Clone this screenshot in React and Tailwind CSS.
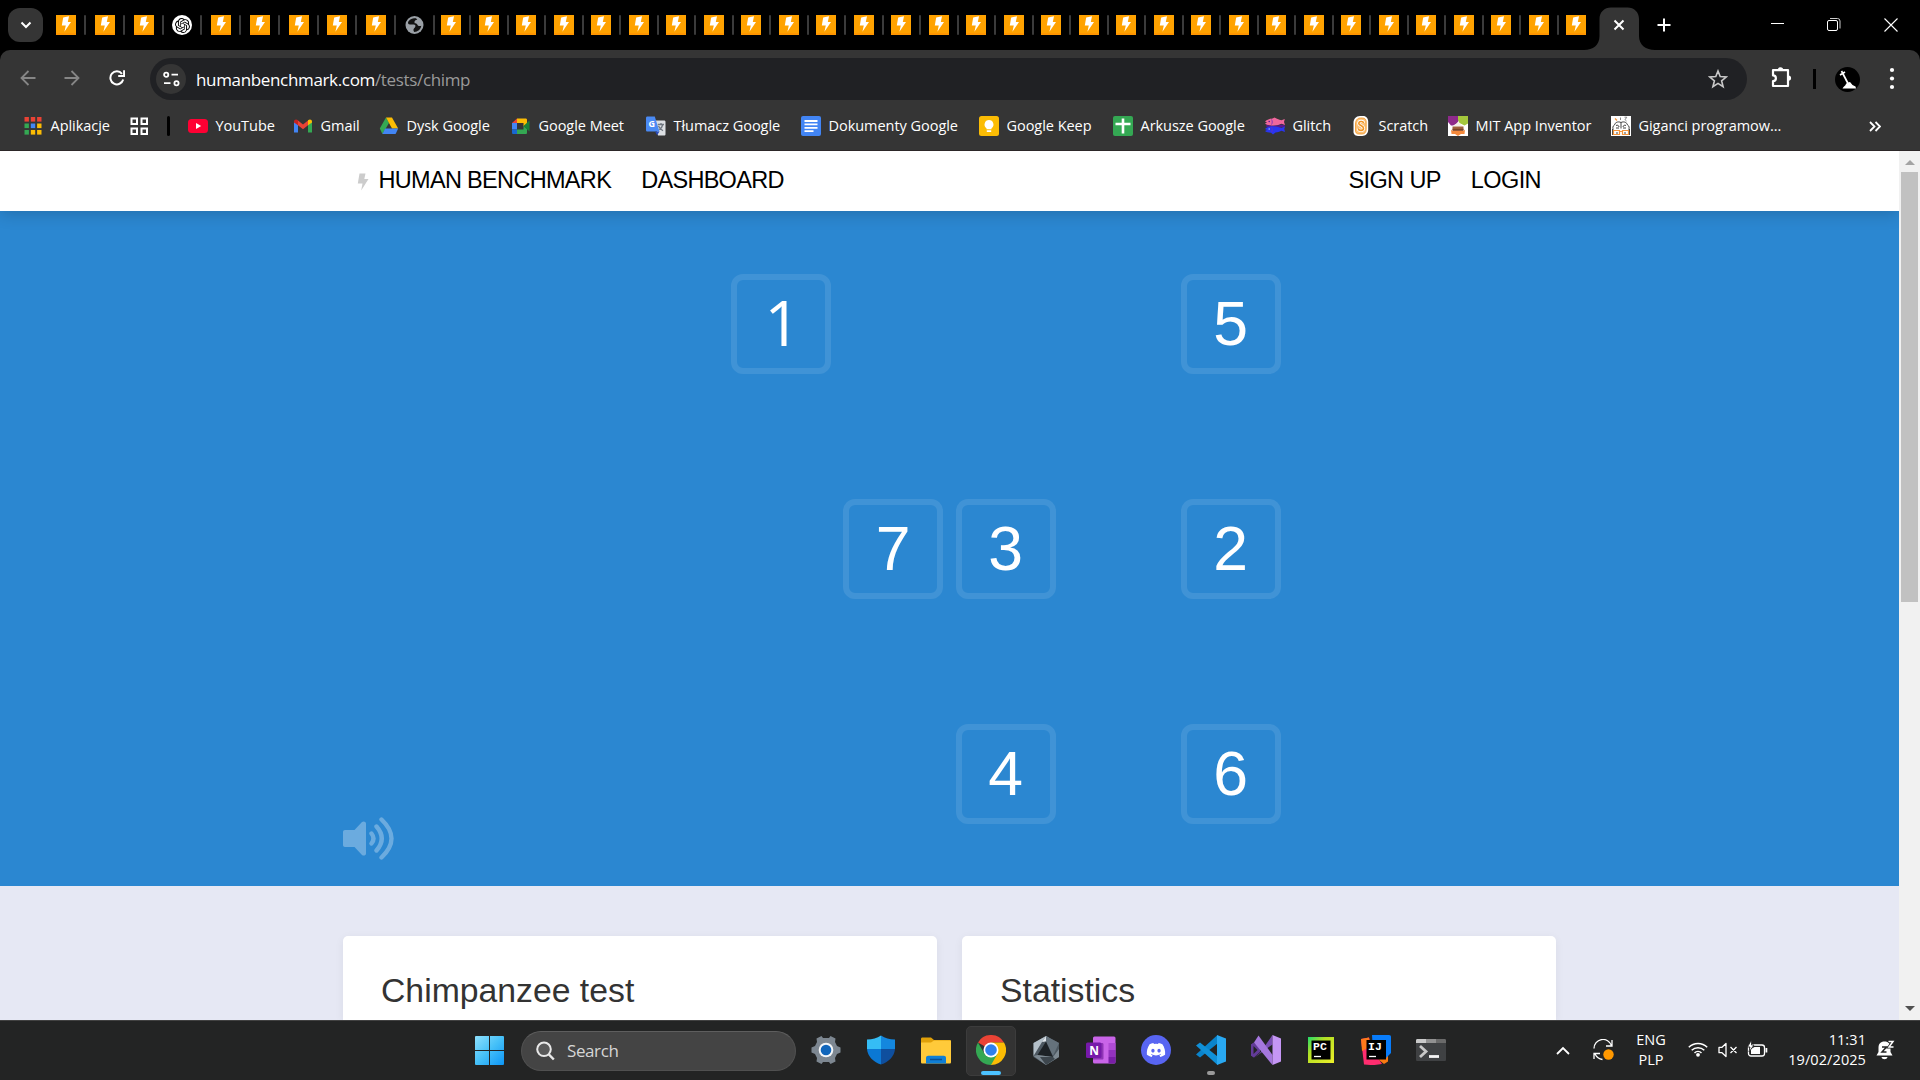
import React from "react";
import { FaDiscord } from "react-icons/fa";
import { SiOpenai } from "react-icons/si";

const UI = "font-['Open_Sans','Noto_Sans',sans-serif]";

/* ---------- tab strip ---------- */

function Bolt() {
  return (
    <div className="h-5 w-5 shrink-0 border-b-2 border-[#ff9500] bg-[#ffa200]">
      <svg viewBox="0 0 20 20" className="block h-5 w-5">
        <path d="M7.2 2.4 13 1.2 11.8 7h3.2L8.4 16.8l1.4-6.4H5.8Z" fill="#fff" />
      </svg>
    </div>
  );
}

function Globe() {
  return (
    <svg viewBox="0 0 20 20" className="h-5 w-5 shrink-0">
      <circle cx="9.500" cy="10" r="9" fill="#9aa0a6" />
      <path
        d="M11 3.300C8.500 3.300 5 3.800 3.500 6.200 2.400 8 3.100 9.600 5.100 9.600h3.600c1.600 0 2 1 1.600 2.200-.3 1.200-1.600 1.400-1.800 2.800-.2 1 .2 1.800.8 2.400 3.600-.2 6.400-2.600 7-6.200-1.600.6-3.400.4-4-1.200-.4-1-1.600-1.400-2.600-1.400-.8-2 .6-3.400 2.600-3.400Z"
        fill="#111"
      />
    </svg>
  );
}

function OpenAi() {
  return (
    <div className="flex h-5 w-5 shrink-0 items-center justify-center rounded-full bg-white">
      <SiOpenai className="h-[15px] w-[15px] text-black" />
    </div>
  );
}

function Tab({ kind, wide, last }) {
  const width = kind === "globe" ? "w-[36.25px]" : wide ? "w-[38.75px]" : "w-[37.5px]";
  return (
    <div className={width + " flex shrink-0 items-center"}>
      {kind === "openai" ? <OpenAi /> : kind === "globe" ? <Globe /> : <Bolt />}
      {!last && <div className="ml-[8px] h-5 w-0.5 shrink-0 rounded-full bg-[#3b3b3b]" />}
    </div>
  );
}

function TabStrip() {
  const tabs = Array.from({ length: 41 }, (_, i) => (i === 3 ? "openai" : i === 9 ? "globe" : "bolt"));
  return (
    <div className="flex h-[50px] items-start bg-black text-white">
      <div className="ml-2 mt-2 flex h-[34px] w-[35px] shrink-0 items-center justify-center rounded-xl bg-[#353535]">
        <svg viewBox="0 0 12 8" className="h-2 w-3">
          <path d="m1.500 1.500 4.500 4.500 4.500-4.500" fill="none" stroke="#fff" strokeWidth="2" />
        </svg>
      </div>
      <div className="ml-[13px] mt-[15px] flex shrink-0">
        {tabs.map((k, i) => (
          <Tab key={i} kind={k} wide={i < 10} last={i === 40} />
        ))}
      </div>
      <svg viewBox="0 0 72 43" className="-ml-[20px] mt-[7px] h-[43px] w-[72px] shrink-0">
        <path d="M0 43c9 0 15.500-5 15.500-14V12c0-7 5-11.500 11.500-11.500h16.500C50 .5 55 5 55 12v17c0 9 7 14 16 14Z" fill="#353535" />
        <path d="m30.500 13.500 9 9m0-9-9 9" stroke="#fff" strokeWidth="2" />
      </svg>
      <svg viewBox="0 0 14 14" className="ml-px mt-[18px] h-3.5 w-3.5 shrink-0">
        <path d="M7 .5v13M.5 7h13" stroke="#fff" strokeWidth="2" />
      </svg>
      <div className="ml-auto flex w-[150px] shrink-0 justify-between pr-[22px] pt-[16px]">
        <svg viewBox="0 0 14 16" className="h-4 w-3.5">
          <path d="M1 7.500h13" stroke="#fff" />
        </svg>
        <svg viewBox="0 0 14 16" className="h-4 w-3.5">
          <rect x=".5" y="4.500" width="10" height="10" rx="1.500" fill="none" stroke="#fff" />
          <path d="M3 2.500h7.500a2.500 2.500 0 0 1 2.500 2.500v7.500" fill="none" stroke="#ccc" />
        </svg>
        <svg viewBox="0 0 14 16" className="h-4 w-3.5">
          <path d="m.5 2.500 13 13m0-13-13 13" stroke="#fff" strokeWidth="1.100" />
        </svg>
      </div>
    </div>
  );
}

/* ---------- address bar ---------- */

function Toolbar() {
  return (
    <div className="bg-black">
      <div className="flex h-[56px] items-center rounded-t-[10px] bg-[#353535] pt-[2px]">
        <svg viewBox="0 0 16 16" className="ml-5 mb-0.5 h-4 w-4">
          <path d="M15.500 8H1.500M8.500 1 1.500 8l7 7" fill="none" stroke="#868686" strokeWidth="1.800" />
        </svg>
        <svg viewBox="0 0 16 16" className="mb-0.5 ml-[28px] h-4 w-4">
          <path d="M.5 8h14M7.500 1l7 7-7 7" fill="none" stroke="#868686" strokeWidth="1.800" />
        </svg>
        <svg viewBox="0 0 16 16" className="mb-0.5 ml-[29px] h-4 w-4">
          <path d="M14.200 9.500A6.500 6.500 0 1 1 13 3.800" fill="none" stroke="#fff" strokeWidth="2" />
          <path d="M9.200 6.100h5.900V.2" fill="none" stroke="#fff" strokeWidth="2" />
        </svg>
        <div className="ml-[25px] flex h-[42px] w-[1597px] shrink-0 items-center rounded-full bg-[#202124] pl-1.5 pr-[19px]">
          <div className="flex h-[30px] w-[30px] items-center justify-center rounded-full bg-[#353535]">
            <svg viewBox="0 0 17 16" className="h-4 w-[17px]">
              <g fill="none" stroke="#fff" strokeWidth="1.800">
                <circle cx="3.200" cy="3.700" r="2.100" />
                <path d="M8.500 3.700h6.500M1 12.200h6.500" />
                <circle cx="13.500" cy="12.200" r="2.100" />
              </g>
            </svg>
          </div>
          <div className={UI + " ml-[10px] mt-0.5 text-[17px] leading-5 tracking-[-0.34px] text-white"}>
            humanbenchmark.com<span className="text-[#9a9a9a]">/tests/chimp</span>
          </div>
          <svg viewBox="0 0 20 20" className="ml-auto h-5 w-5">
            <path d="m10 2 2.200 5.600 6 .4-4.600 3.800 1.500 5.900L10 14.400l-5.100 3.300 1.500-5.900L1.800 8l6-.4Z" fill="none" stroke="#c9c9c9" strokeWidth="1.600" />
          </svg>
        </div>
        <svg viewBox="0 0 22 22" className="mb-1 ml-6 h-[22px] w-[22px] shrink-0">
          <path d="M2 4.200H17V20H2v-4.800a2.900 2.900 0 0 0 0-5.800Z" fill="none" stroke="#fff" strokeWidth="2.200" strokeLinejoin="round" />
          <path d="M6.800 4a2.700 2.700 0 0 1 5.400 0ZM17.400 9.400a2.700 2.700 0 0 1 0 5.400Z" fill="#fff" />
        </svg>
        <div className="ml-5 h-5 w-[3px] bg-black" />
        <svg viewBox="0 0 25 25" className="ml-[19px] h-[25px] w-[25px]">
          <circle cx="12.500" cy="12.500" r="12.500" fill="#000" />
          <path d="M7.500 21.500c1-2 2.500-2.200 3.500-4.500l1-1.200 3-.8 2.500 3 3 1.500.5 2Z" fill="#fff" />
          <path d="m6.500 4 6 11.500M5 8l5-3M11 13l2 3" stroke="#fff" strokeWidth="1.700" />
        </svg>
        <svg viewBox="0 0 6 24" className="ml-[29px] h-6 w-1.5">
          <circle cx="3" cy="3" r="2.100" fill="#fff" />
          <circle cx="3" cy="11.500" r="2.100" fill="#fff" />
          <circle cx="3" cy="20" r="2.100" fill="#fff" />
        </svg>
      </div>
    </div>
  );
}

/* ---------- bookmarks ---------- */

const appColors = ["#ea4335", "#ea4335", "#ea4335", "#34a853", "#4285f4", "#fbbc04", "#34a853", "#fbbc04", "#fbbc04"];

const icons = {
  apps: (
    <g>
      {appColors.map((c, i) => (
        <rect key={i} x={1.500 + (i % 3) * 6.300} y={1 + Math.floor(i / 3) * 6.500} width="4.400" height="4.600" fill={c} />
      ))}
    </g>
  ),
  youtube: (
    <g>
      <rect y="3" width="20" height="14" rx="3.500" fill="#ff0033" />
      <path d="m8 7 5.200 3L8 13Z" fill="#fff" />
    </g>
  ),
  gmail: (
    <g>
      <path d="M1 5v11.500h4V8Z" fill="#4285f4" />
      <path d="M15 8v8.500h4V5Z" fill="#34a853" />
      <path d="M5 4.500 10 8.500l5-4V9.300L10 13.200 5 9.300Z" fill="#ea4335" />
      <path d="M1 5.500C1 3.200 3.400 2.800 5 4.200v5.100L1 6.500Z" fill="#c5221f" />
      <path d="M19 5.500c0-2.300-2.400-2.700-4-1.300v5.100l4-2.800Z" fill="#fbbc04" />
    </g>
  ),
  drive: (
    <g>
      <path d="m7 1.500 3 5.500-6.600 11L.8 12.500Z" fill="#34a853" />
      <path d="M7 1.500h6l6.200 11H13Z" fill="#fbbc04" />
      <path d="M6.200 12.500h13L16.600 18H3.400Z" fill="#4285f4" />
    </g>
  ),
  meet: (
    <g>
      <path d="M6 2.500h8.500c1 0 1.500.5 1.500 1.500v4l-3.500 2.500V7H6Z" fill="#fbbc04" />
      <path d="M6 2.500V7H1Z" fill="#ea4335" />
      <path d="M1 7h5v6.500H1Z" fill="#4285f4" />
      <path d="M1 13.500h5V18H2.500C1.500 18 1 17.500 1 16.500Z" fill="#1967d2" />
      <path d="M6 13.500h6.500V10l3.500 3v3.500c0 1-.5 1.500-1.500 1.500H6Z" fill="#34a853" />
      <path d="m12.500 10 6-5.500v11Z" fill="#188038" />
    </g>
  ),
  translate: (
    <g>
      <path d="M8 4.500h10c1 0 1.500.5 1.500 1.500v12c0 1-.5 1.500-1.500 1.500h-6Z" fill="#dcdfe3" />
      <path d="M1.500.5h7.300L13.500 15.500h-12C.6 15.500 0 15 0 14V2C0 1 .6.5 1.500.5Z" fill="#4a8af4" />
      <path d="M9 15.500h4.500l-2.300 3.800Z" fill="#2a4bb8" />
      <path d="M11.800 8.500h6.200m-3-1.500v1.500m1.800 0c-.5 2.500-2.500 4.500-3.500 5.200m-.8-3.700c.8 2 2.800 3.800 4.500 4.800" fill="none" stroke="#6f7780" strokeWidth="1.300" />
      <text x="2.600" y="11" fontFamily="Open Sans" fontWeight="700" fontSize="9" fill="#fff">G</text>
    </g>
  ),
  docs: (
    <g>
      <rect width="20" height="20" rx="2" fill="#4285f4" />
      <path d="M3.500 5h13M3.500 8.400h13M3.500 11.800h13M3.500 15.200h9" stroke="#fff" strokeWidth="1.800" />
    </g>
  ),
  keep: (
    <g>
      <rect width="20" height="20" rx="2.500" fill="#fbbc04" />
      <path d="M10 4a4.500 4.500 0 0 0-2.500 8.200v1h5v-1A4.500 4.500 0 0 0 10 4ZM7.800 14.200h4.400v1.800H7.800Z" fill="#fff" />
    </g>
  ),
  sheets: (
    <g>
      <rect width="20" height="20" rx="2" fill="#34a853" />
      <path d="M10 2.500v15M2.500 8h15" stroke="#fff" strokeWidth="2.600" />
    </g>
  ),
  glitch: (
    <g>
      <path d="M0 5.500C2 3.500 5 2.800 7.500 2.500l2-1 2.500 1.300c1.800.5 3.200 1.400 4.500 1.400L19.800 3 19 6l1 3-3.500-1.200C14 9 11 9.700 8 9.700 4.500 9.700 1.500 9 0 7.500l2-1Z" fill="#f0679c" />
      <path d="M1.500 8.800c4 1.400 11 1.200 15-.3L20 9.500l-.5 2-3-.5C12 12.500 5 12.500 1 10.500Z" fill="#5a1790" />
      <path d="M0 13C2 11 5 10.300 8 10.300c4 0 6.500 1.500 8.500 1.500L20 10.500 19.300 13l.7 3-3.500-1.200c-2 1-4 1.500-6 1.800L8 18.500l-2-1.800C3.500 16.500 1 16 0 15l2-1Z" fill="#2a35ee" />
      <circle cx="4.200" cy="5.500" r=".8" fill="#5a1790" />
      <circle cx="4.200" cy="13" r=".8" fill="#9fb4ff" />
      <path d="M6.500 3.500c1 1.500 1 3.500 0 5M6.500 11.200c1 1.500 1 3.500 0 4.800" stroke="#6b2fc0" strokeWidth=".8" fill="none" />
    </g>
  ),
  scratch: (
    <g>
      <path d="M9 0h3c3.500 0 5.200 2.500 5.200 5.500v8.300c0 3.500-2.500 6.200-6 6.200H7c-3 0-4.800-2-4.500-5.200V7C2.500 3 5 0 9 0Z" fill="#fff" />
      <path d="M9.500 2h2c2.500 0 3.700 1.700 3.700 4v7.500c0 2.700-1.500 4.500-4.200 4.500H7.800c-2.300 0-3.500-1.500-3.300-4V8C4.500 4.500 6.200 2 9.500 2Z" fill="#fbc27a" stroke="#f29422" strokeWidth=".8" />
      <path d="M12.500 7C12.200 4.800 7.800 4.900 7.800 7.500c0 2.200 4.700 2 4.700 4.700 0 2.800-4.700 3-5.300.3" fill="none" stroke="#fff" strokeWidth="3.200" />
      <path d="M12.500 7C12.200 4.800 7.800 4.900 7.800 7.500c0 2.200 4.700 2 4.700 4.700 0 2.800-4.700 3-5.300.3" fill="none" stroke="#f29422" strokeWidth="1.600" />
    </g>
  ),
  mit: (
    <g>
      <path d="M0 0h20v20H0Z" fill="#fff" />
      <path d="M0 0h10l1 4-2 3.500-4 2H3L0 6Z" fill="#8e2a8b" />
      <path d="M10 0h10v7.500l-3.500 2-5-2.500L10 4Z" fill="#a4c73c" />
      <path d="m10 6 5 4.500H5Z" fill="#f4ece6" />
      <path d="M4.500 10.500h11v5h-11Z" fill="#a0623d" />
      <path d="M4.500 12.800h11v1.400h-11Z" fill="#7a4226" />
      <path d="m3 13.500 1.500 1.500h11L17 13.500 16.500 18H13l-3 2-3-2H3.500Z" fill="#f58a3c" />
    </g>
  ),
  giganci: (
    <g>
      <path d="M0 0h20v20H0Z" fill="#fff" />
      <g fill="none" stroke="#444" strokeWidth="1">
        <path d="M10 6.500c-3-1.500-6 0-6.500 2.500-2 .8-2 3.500-1 4.500M10 6.500c3-1.500 6 0 6.500 2.500 2 .8 2 3.500 1 4.500M10 6.500v6M5 9.500c1.500-.8 3 0 3 1.500M15 9.500c-1.500-.8-3 0-3 1.500M1.500 13v6M18.500 13v6M5 12h3M12 12h3" />
      </g>
      <path d="M2.500 14.500h6v4h-6ZM11.500 14.500h6v4h-6ZM8.500 15.500h3M4 2.500l2 2" stroke="#f5953a" strokeWidth="1.200" fill="none" />
      <path d="M5 17h2M13 17h2" stroke="#444" />
      <path d="M9.500 4V1.500M13.500 1.200h2.300L13.800 4M14.500 4.500l1 .5" fill="none" stroke="#888" />
    </g>
  ),
};

function Bookmark({ icon, label, width }) {
  return (
    <div className={width + " flex shrink-0 items-center"}>
      <svg viewBox="0 0 20 20" className="h-5 w-5 shrink-0">{icons[icon]}</svg>
      <span className="ml-[7.500px] whitespace-nowrap tracking-[-0.04px]">{label}</span>
    </div>
  );
}

function Bookmarks() {
  return (
    <div className={UI + " flex h-[45px] items-center border-b border-[#2c2728] bg-[#353535] pb-[4px] pl-[23px] text-[14.500px] leading-5 text-white"}>
      <Bookmark icon="apps" label="Aplikacje" width="w-[107px]" />
      <svg viewBox="0 0 19 19" className="h-[19px] w-[19px] shrink-0">
        <g fill="none" stroke="#fff" strokeWidth="2">
          <path d="M1.500 1.500h5.500V7H1.500ZM11.500 1.500H17V7h-5.500ZM1.500 11.500h5.500V17H1.500ZM11.500 11.500H17V17h-5.500Z" />
        </g>
      </svg>
      <div className="ml-[18px] mr-[18px] h-5 w-[3px] shrink-0 rounded-full bg-black" />
      <Bookmark icon="youtube" label="YouTube" width="w-[105px]" />
      <Bookmark icon="gmail" label="Gmail" width="w-[86px]" />
      <Bookmark icon="drive" label="Dysk Google" width="w-[132px]" />
      <Bookmark icon="meet" label="Google Meet" width="w-[135px]" />
      <Bookmark icon="translate" label="Tłumacz Google" width="w-[155px]" />
      <Bookmark icon="docs" label="Dokumenty Google" width="w-[178px]" />
      <Bookmark icon="keep" label="Google Keep" width="w-[134px]" />
      <Bookmark icon="sheets" label="Arkusze Google" width="w-[152px]" />
      <Bookmark icon="glitch" label="Glitch" width="w-[86px]" />
      <Bookmark icon="scratch" label="Scratch" width="w-[97px]" />
      <Bookmark icon="mit" label="MIT App Inventor" width="w-[163px]" />
      <Bookmark icon="giganci" label="Giganci programow..." width="w-[180px]" />
      <svg viewBox="0 0 12 11" className="ml-auto mr-[39px] h-[11px] w-3 shrink-0">
        <path d="m1 1 4.500 4.500L1 10M6.500 1 11 5.500 6.500 10" fill="none" stroke="#fff" strokeWidth="1.800" />
      </svg>
    </div>
  );
}

/* ---------- page ---------- */

const tiles = [
  { n: 1, place: "col-start-3 row-start-1 pl-[3px] pb-[4px] font-['Open_Sans',sans-serif]" },
  { n: 5, place: "col-start-7 row-start-1 pb-[2px]" },
  { n: 7, place: "col-start-4 row-start-3 pb-[2px]" },
  { n: 3, place: "col-start-5 row-start-3 pb-[2px]" },
  { n: 2, place: "col-start-7 row-start-3 pb-[2px]" },
  { n: 4, place: "col-start-5 row-start-5 pb-[2px]" },
  { n: 6, place: "col-start-7 row-start-5 pb-[2px]" },
];

function Page() {
  return (
    <div className="flex h-[869px] overflow-hidden font-['Liberation_Sans',Arial,sans-serif]">
      <div className="flex w-[1899px] shrink-0 flex-col overflow-hidden bg-[#e6e8f4]">
        <div className="z-10 flex h-[60px] shrink-0 items-center bg-white pb-px pl-[357px] pr-[358px] text-[23.500px] text-black shadow-[0_2px_16px_rgba(0,0,0,0.2)]">
          <svg viewBox="0 0 12 18" className="mt-0.5 h-[18px] w-3">
            <path d="M2.500.5h6L7.300 6h4.200L4.200 17.500 5.500 10.500H.8Z" fill="#ccc" />
          </svg>
          <span className="ml-[9.500px] tracking-[-0.68px]">HUMAN BENCHMARK</span>
          <span className="ml-[30px] tracking-[-0.7px]">DASHBOARD</span>
          <span className="ml-auto tracking-[-0.6px]">SIGN UP</span>
          <span className="ml-[30px] tracking-[-0.6px]">LOGIN</span>
        </div>
        <div className="flex h-[675px] shrink-0 flex-col bg-[#2b87d1] pt-[56.500px]">
          <div className="ml-[499.500px] grid grid-cols-[repeat(8,112.5px)] grid-rows-[repeat(5,112.5px)]">
            {tiles.map((t) => (
              <div
                key={t.n}
                className={t.place + " m-[6.250px] flex items-center justify-center rounded-[12px] border-[6px] border-white/10 text-[62.500px] leading-none text-white"}
              >
                {t.n}
              </div>
            ))}
          </div>
          <svg viewBox="0 0 51 43" className="-mt-[13px] ml-[343px] h-[43px] w-[51px]">
            <g opacity=".3">
              <path d="M2 13h9.500l7.500-8c1.500-1.200 4-.5 4 1.500v30c0 2-2.500 2.700-4 1.500L11.500 30H2c-1.200 0-2-.8-2-2V15c0-1.200.8-2 2-2Z" fill="#fff" />
              <path d="M28.500 16.500q4 5 0 10M33.500 9.500q10.500 12 0 24M38.500 2.500q20 19 0 38" fill="none" stroke="#fff" strokeWidth="4.400" strokeLinecap="round" />
            </g>
          </svg>
        </div>
        <div className="mt-[50px] flex flex-1 gap-[25px] px-[343px] text-[33.750px] leading-[38px] text-[#333]">
          <div className="h-full w-[594px] rounded-t-[5px] bg-white pl-[38px] pt-[35px] shadow-[0_2px_10px_rgba(0,0,0,0.06)]">Chimpanzee test</div>
          <div className="h-full w-[594px] rounded-t-[5px] bg-white pl-[38px] pt-[35px] shadow-[0_2px_10px_rgba(0,0,0,0.06)]">Statistics</div>
        </div>
      </div>
      <div className="flex w-[21px] shrink-0 flex-col items-center bg-[#f1f1f1] pt-[9px]">
        <svg viewBox="0 0 10 5" className="h-[5px] w-2.5"><path d="m5 0 5 5H0Z" fill="#a3a3a3" /></svg>
        <div className="mt-[7px] h-[430px] w-[17px] bg-[#c1c1c1]" />
        <svg viewBox="0 0 10 5" className="mb-[9px] mt-auto h-[5px] w-2.5"><path d="m5 5 5-5H0Z" fill="#505050" /></svg>
      </div>
    </div>
  );
}

/* ---------- taskbar ---------- */

const taskIcons = {
  settings: (
    <g>
      <path d="M10.500 1 12 3h6l1.500-2 5 2.500-.5 3.500 2 4 3.500 1.500v5L26 19l-2 4 .5 3.500-5 2.500L18 27h-6l-1.500 2-5-2.500L6 23l-2-4L.5 17.500v-5L4 11l2-4-.5-3.500Z" fill="#7d8791" />
      <circle cx="15" cy="15" r="7.300" fill="#f4f6f8" />
      <circle cx="15" cy="15" r="5.300" fill="#1166bb" />
    </g>
  ),
  defender: (
    <g>
      <path d="M15 .5c4 2.800 8.500 3.800 14 4V14H15Z" fill="#1487de" />
      <path d="M15 .5C11 3.300 6.500 4.300 1 4.500V14h14Z" fill="#35bdf5" />
      <path d="M1 14h14v15.500C7 27 1.500 21 1 14Z" fill="#0b78d4" />
      <path d="M29 14H15v15.500C23 27 28.500 21 29 14Z" fill="#0f4f9e" />
    </g>
  ),
  folder: (
    <g>
      <path d="M0 4c0-1 .5-1.500 1.500-1.500H10l3 2.500h15c1.500 0 2 .5 2 1.500V12H0Z" fill="#e0a009" />
      <path d="M0 7.500h10l3-2h17V27c0 1-.5 1.500-1.500 1.500h-27C.5 28.500 0 28 0 27Z" fill="#ffca3a" />
      <path d="M5 28.500V23c0-1.500 1-2.200 2.200-2.200h15.600c1.200 0 2.200.7 2.200 2.200v5.500Z" fill="#0f7fd6" />
      <path d="M9 24.500h12" stroke="#0a4f94" strokeWidth="1.500" />
    </g>
  ),
  chrome: (
    <g>
      <path d="M2 7.500a15 15 0 0 1 26 0H15v7.500Z" fill="#ea4335" />
      <path d="M28 7.500A15 15 0 0 1 15 30l-1-1 7.500-14L15 7.500Z" fill="#fbbc04" />
      <path d="M2 7.500A15 15 0 0 0 15 30l6.500-11.200L15 21l-6.500-2.200Z" fill="#34a853" />
      <circle cx="15" cy="15" r="7.500" fill="#fff" />
      <circle cx="15" cy="15" r="5.800" fill="#2f80ed" />
    </g>
  ),
  gem: (
    <g>
      <path d="M15 1 28 8v14l-13 8L2.500 22V8Z" fill="#4d5861" />
      <path d="M15 1 2.500 8v13L11 7Z" fill="#b4c0c9" />
      <path d="M15 1 11 7l10-1.500Z" fill="#dfe6eb" />
      <path d="m15 1 13 7-6 13-7-14Z" fill="#65727c" />
      <path d="M15 6.500 6.500 20l15.500 2Z" fill="#1d2226" />
      <path d="m2.500 21 4-1L22 22l6-8v8l-13 8Z" fill="#7c8891" />
      <path d="m9 22 6 8 9-6-2-2Z" fill="#3d464d" />
    </g>
  ),
  onenote: (
    <g>
      <rect x="7" y="1.500" width="22.500" height="27" rx="1.500" fill="#c964e8" />
      <path d="M22.500 8h7v7h-7Z" fill="#b04bd5" />
      <path d="M22.500 15h7v7h-7Z" fill="#9332bf" />
      <path d="M22.500 22h7v5c0 1-.5 1.500-1.500 1.500h-5.500Z" fill="#7a1fa8" />
      <path d="M7 8h9c1 0 1.500.5 1.500 1.500V23c0 1-.5 1.500-1.500 1.500H7Z" fill="#8f35b5" />
      <rect y="7.500" width="15.500" height="15.500" rx="1.500" fill="#7719aa" />
      <text x="3.200" y="19.500" fontFamily="Open Sans" fontWeight="700" fontSize="12" fill="#fff">N</text>
    </g>
  ),
  vscode: (
    <g>
      <path d="M21.500 0v8.500L4 22.500 0 19.600Z" fill="#0a84cc" />
      <path d="M21.500 30v-8.500L4 7.500 0 10.400Z" fill="#1090d8" />
      <path d="M21 0 30 3.500v23L21 30Z" fill="#29a9f2" />
    </g>
  ),
  vs: (
    <g>
      <path d="m0 9.500 3-2v15l-3-2Z" fill="#5b3590" />
      <path d="M0 9.500 3 7.500l6 5.200V17l-6 5.500-3-2Z" fill="#623b98" />
      <path d="M9 18 21.500 0v9.500L3 23Z" fill="#7a4fb5" />
      <path d="m2.500 11 4 4-4 4Z" fill="#232424" />
      <path d="M7.500 0.500 21.500 20V30L3 7.500Z" fill="#a577de" />
      <path d="m21.500 0 8.500 3.500v23L21.500 30Z" fill="#c596f5" />
    </g>
  ),
  pycharm: (
    <g>
      <defs>
        <linearGradient id="pc" x1="0" y1="0" x2="1" y2="1">
          <stop offset="0" stopColor="#1fdc6c" />
          <stop offset=".35" stopColor="#b4e024" />
          <stop offset="1" stopColor="#eef02a" />
        </linearGradient>
      </defs>
      <rect x="2" y="2" width="26" height="26" fill="url(#pc)" />
      <rect x="5.500" y="5.500" width="19" height="19" fill="#000" />
      <text x="7" y="15" fontFamily="Liberation Mono" fontWeight="700" fontSize="11.500" fill="#fff">PC</text>
      <path d="M8 21.500h7" stroke="#fff" strokeWidth="1.300" />
    </g>
  ),
  idea: (
    <g>
      <path d="M0 4 8 2.500l4 13L21 29l-9 1.200L3 29.500Z" fill="#ff2d6f" />
      <path d="M0 4 8 2.500 9 12 1 16Z" fill="#ff7a1a" />
      <path d="M20 20h7v6.500L23 29l-5-4Z" fill="#f97a12" />
      <path d="M11 0h17c1.300 0 2 .7 2 2v16l-6 6-12-9Z" fill="#087cfa" />
      <rect x="5.500" y="5" width="19.500" height="19.500" fill="#000" />
      <text x="7" y="15" fontFamily="Liberation Mono" fontWeight="700" fontSize="11.500" fill="#fff">IJ</text>
      <path d="M8 21.500h7" stroke="#fff" strokeWidth="1.300" />
    </g>
  ),
  terminal: (
    <g>
      <path d="M0 8h30v16.500c0 1-.5 1.500-1.500 1.500h-27C.5 26 0 25.500 0 24.500Z" fill="#3f4143" />
      <path d="M1.500 4H10v4H0V5.500C0 4.500.5 4 1.500 4Z" fill="#c9c9c9" />
      <path d="M10 4h10v4H10Z" fill="#919191" />
      <path d="M20 4h8.500c1 0 1.500.5 1.500 1.500V8H20Z" fill="#6a6a6a" />
      <path d="m4 11 6 5.500-6 5.500" fill="none" stroke="#c8c8c8" strokeWidth="2.800" />
      <path d="M13 21.500h10" stroke="#f4f4f4" strokeWidth="2.800" />
    </g>
  ),
};

function TaskIcon({ name, active, dot }) {
  return (
    <div className="flex w-[55px] shrink-0 justify-center">
      <div className={(active ? "border border-[#3c3c3c] bg-[#333333]" : "border border-transparent") + " relative flex h-[50px] w-[50px] items-center justify-center rounded-[5px] pb-px"}>
        {name === "discord" ? (
          <div className="flex h-[30px] w-[30px] items-center justify-center rounded-full bg-[#5865f2]">
            <FaDiscord className="h-[20px] w-[20px] text-white" />
          </div>
        ) : (
          <svg viewBox="0 0 30 30" className="h-[30px] w-[30px]">{taskIcons[name]}</svg>
        )}
        {active && <div className="absolute bottom-0 h-1 w-5 rounded-full bg-[#4cc2ff]" />}
        {dot && <div className="absolute bottom-0 h-1 w-2 rounded-full bg-[#9a9a9a]" />}
      </div>
    </div>
  );
}

function Taskbar() {
  return (
    <div className={UI + " flex h-[60px] items-center border-t border-[#414141] bg-[#232424] text-white"}>
      <svg viewBox="0 0 29 29" className="ml-[475px] h-[29px] w-[29px] shrink-0">
        <defs>
          <linearGradient id="win" x1="0" y1="0" x2="1" y2="1">
            <stop offset="0" stopColor="#8ee0fd" />
            <stop offset=".5" stopColor="#45c0f8" />
            <stop offset="1" stopColor="#0d95f5" />
          </linearGradient>
        </defs>
        <path d="M1 0h13v14H0V1q0-1 1-1ZM15 0h13q1 0 1 1v13H15ZM0 15h14v14H1q-1 0-1-1ZM15 15h14v13q0 1-1 1H15Z" fill="url(#win)" />
      </svg>
      <div className="ml-[17px] flex h-10 w-[275px] shrink-0 items-center rounded-full border border-[#505050] border-t-[#5e5e5e] bg-[#444444]">
        <svg viewBox="0 0 19 20" className="ml-[14px] h-5 w-[19px]">
          <circle cx="8" cy="8.300" r="6.800" fill="#5a5a5a" stroke="#e8e8e8" strokeWidth="2" />
          <path d="m12.800 13.300 5 5.200" stroke="#e8e8e8" strokeWidth="2.400" />
        </svg>
        <span className="ml-3 text-[17px] tracking-[-0.4px] text-[#d6d6d6]">Search</span>
      </div>
      <div className="ml-[2.500px] flex">
        <TaskIcon name="settings" />
        <TaskIcon name="defender" />
        <TaskIcon name="folder" />
        <TaskIcon name="chrome" active />
        <TaskIcon name="gem" />
        <TaskIcon name="onenote" />
        <TaskIcon name="discord" />
        <TaskIcon name="vscode" dot />
        <TaskIcon name="vs" />
        <TaskIcon name="pycharm" />
        <TaskIcon name="idea" />
        <TaskIcon name="terminal" />
      </div>
      <div className="ml-auto flex shrink-0 items-center pr-[25px]">
        <svg viewBox="0 0 14 9" className="h-[9px] w-3.5"><path d="m1 8 6-6 6 6" fill="none" stroke="#fff" strokeWidth="1.800" /></svg>
        <svg viewBox="0 0 21 22" className="mb-0.5 ml-[23px] h-[22px] w-[21px]">
          <path d="M1 9.500a9 9 0 0 1 17.500-3M19 1v6h-6M1 20v-5.500h6M2 15c1.500 3 4 5 7.500 5.500" fill="none" stroke="#fff" strokeWidth="1.300" />
          <circle cx="15.500" cy="15.500" r="5.200" fill="#ff9800" />
        </svg>
        <div className="ml-[19px] mr-px w-[36px] pb-px text-center text-[14.500px] leading-5">
          <div>ENG</div>
          <div>PLP</div>
        </div>
        <svg viewBox="0 0 20 16" className="mb-1 ml-[18px] h-4 w-5">
          <g fill="none" stroke="#fff" strokeWidth="1.500">
            <path d="M.8 6.300a13 13 0 0 1 18.400 0M3.700 9.200a9 9 0 0 1 12.600 0M6.500 12a5 5 0 0 1 7 0" />
          </g>
          <circle cx="10" cy="13.800" r="1.900" fill="#fff" />
        </svg>
        <svg viewBox="0 0 20 16" className="mb-0.5 ml-[10px] h-4 w-5">
          <path d="M1 5.300h3L8 1.500v13l-4-3.800H1ZM12.500 5l6 6m0-6-6 6" fill="none" stroke="#fff" strokeWidth="1.300" strokeLinejoin="round" />
        </svg>
        <svg viewBox="0 0 21 18" className="mb-1 ml-[9px] mr-px h-[18px] w-[21px]">
          <rect x="1.500" y="5" width="16" height="11" rx="2.500" fill="none" stroke="#fff" strokeWidth="1.300" />
          <path d="M18.500 8h1.800v4.500h-1.800Z" fill="#fff" />
          <path d="M4 14V9l3.500-2H13v7Z" fill="#fff" />
          <path d="M4.500 0 .5 7H3L2 12l5-7H4.500Z" fill="#fff" stroke="#232424" strokeWidth=".8" />
        </svg>
        <div className="ml-[15px] w-[82px] whitespace-nowrap pb-0.5 text-right text-[14.500px] leading-5 tracking-[0.08px]">
          <div>11:31</div>
          <div>19/02/2025</div>
        </div>
        <svg viewBox="0 0 19 20" className="mb-0.5 ml-2.5 h-5 w-[19px]">
          <path d="M8.500 1.500c4 0 6 2.500 6 6v4.500l2 3.500H.5l2-3.500V7.500c0-3.500 2-6 6-6ZM5.500 17h6c-.5 3-5.500 3-6 0Z" fill="#fff" />
          <path d="M6 7h4.500L6 12h4.500" fill="none" stroke="#232424" strokeWidth="1.500" />
          <path d="M12 1.500h5L13 7h4.500" fill="none" stroke="#232424" strokeWidth="3" />
          <path d="M12.500 1.500h4.500L13 7h4.500" fill="none" stroke="#fff" strokeWidth="1.500" />
        </svg>
      </div>
    </div>
  );
}

export default function App() {
  return (
    <div className="flex h-[1080px] w-[1920px] flex-col overflow-hidden">
      <TabStrip />
      <Toolbar />
      <Bookmarks />
      <Page />
      <Taskbar />
    </div>
  );
}
